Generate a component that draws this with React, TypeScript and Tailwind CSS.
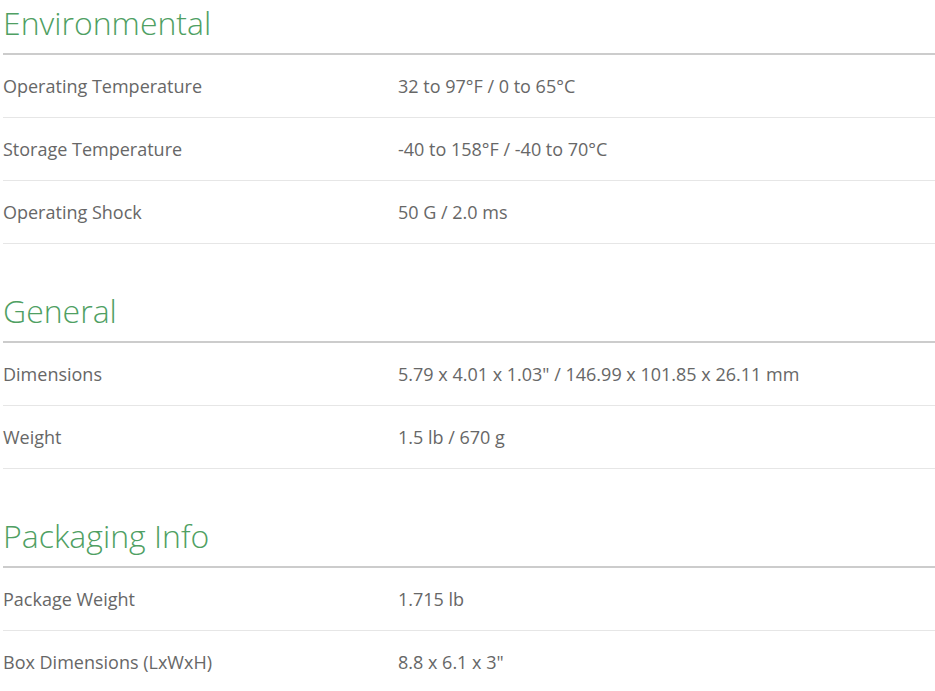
import React from "react";

type Row = [string, string];
const sections: { title: string; rows: Row[] }[] = [
  {
    title: "Environmental",
    rows: [
      ["Operating Temperature", "32 to 97°F / 0 to 65°C"],
      ["Storage Temperature", "-40 to 158°F / -40 to 70°C"],
      ["Operating Shock", "50 G / 2.0 ms"],
    ],
  },
  {
    title: "General",
    rows: [
      ["Dimensions", '5.79 x 4.01 x 1.03" / 146.99 x 101.85 x 26.11 mm'],
      ["Weight", "1.5 lb / 670 g"],
    ],
  },
  {
    title: "Packaging Info",
    rows: [
      ["Package Weight", "1.715 lb"],
      ["Box Dimensions (LxWxH)", '8.8 x 6.1 x 3"'],
    ],
  },
];

export default function App() {
  return (
    <div
      className="bg-white w-[935px] h-[691px] overflow-hidden pl-[3px]"
      style={{ fontFamily: '"Open Sans", "Liberation Sans", sans-serif' }}
    >
      {sections.map((s, i) => (
        <section key={s.title} className={i === 0 ? "pt-px" : "mt-[45px]"}>
          <h2 className="text-[32px] leading-[44px] font-light text-[#4f9f63] pb-[8px] border-b-2 border-[#cccccc]">
            {s.title}
          </h2>
          {s.rows.map(([k, v]) => (
            <div
              key={k}
              className="flex h-[63px] items-center border-b border-[#e6e6e6] text-[18px] text-[#676767]"
            >
              <div className="w-[395px] shrink-0">{k}</div>
              <div>{v}</div>
            </div>
          ))}
        </section>
      ))}
    </div>
  );
}
